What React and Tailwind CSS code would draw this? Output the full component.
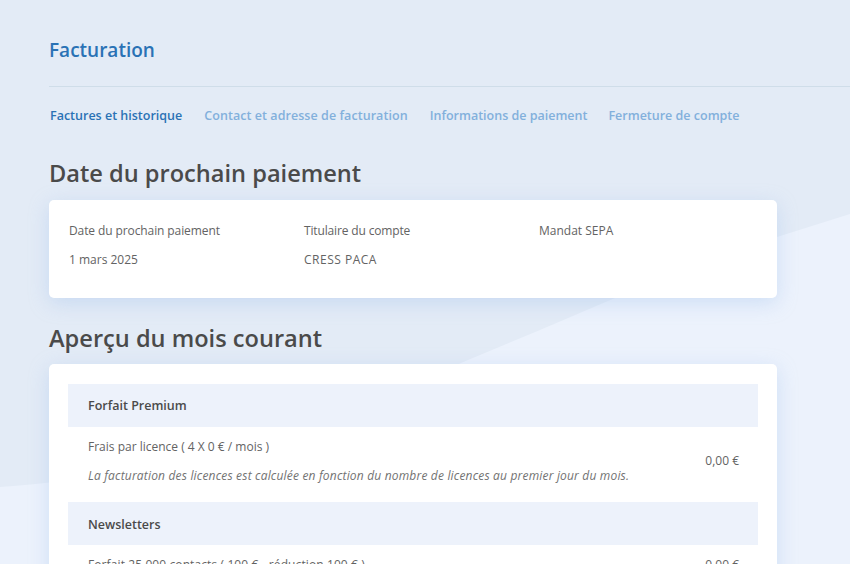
import React from 'react'

const SectionHeader = ({ children, className }) => (
  <div className={`h-[43px] flex items-center bg-[#edf2fb] pl-[20px] text-[12.5px] font-semibold text-[#4a4a4a] ${className}`}>
    {children}
  </div>
)

const App = () => {
  return (
    <div className="relative h-[564px] w-[850px] overflow-hidden bg-[#e3ebf6] font-['Open_Sans',sans-serif] text-[#4a4a4a]">
      {/* fond */}
      <svg className="absolute inset-0" width="850" height="564" viewBox="0 0 850 564">
        <path d="M0 487 C 170 476 330 420 468 360 L 540 330 L 615 298 L 777 237 L 850 214 L 850 564 L 0 564 Z" fill="#ecf2fc" />
      </svg>

      <div className="relative pl-[49px] w-[777px]">
        <div className="h-[87px] w-[801px] border-b border-[#cfdde9] pt-[38px]">
          <h1 className="text-[19px] leading-[24px] font-semibold text-[#2a72b5]">Facturation</h1>
        </div>

        <div className="flex gap-[22px] pl-px pt-[21px] text-[12.5px] leading-[16px] font-semibold text-[#82b0dc]">
          <span className="text-[#2a72b5]">Factures et historique</span>
          <span className="tracking-[0.06px]">Contact et adresse de facturation</span>
          <span>Informations de paiement</span>
          <span className="-ml-px">Fermeture de compte</span>
        </div>

        <h2 className="mt-[34px] text-[23.6px] leading-[30px] font-semibold">Date du prochain paiement</h2>

        <div className="mt-[12px] h-[98px] rounded-[5px] bg-white pl-[20px] pt-[23px] text-[12px] leading-[15px] text-[#636363] shadow-[0_5px_20px_rgba(150,185,235,0.35)]">
          <div className="grid grid-cols-[235px_235px_1fr] gap-y-[14px]">
            <span className="tracking-[-0.1px]">Date du prochain paiement</span>
            <span className="tracking-[-0.15px]">Titulaire du compte</span>
            <span>Mandat SEPA</span>
            <span>1 mars 2025</span>
            <span className="tracking-[0.5px]">CRESS PACA</span>
          </div>
        </div>

        <h2 className="mt-[25px] text-[23.6px] leading-[30px] font-semibold">Aperçu du mois courant</h2>

        <div className="mt-[11px] h-[300px] rounded-[5px] bg-white p-[19px] pt-[20px] text-[12px] leading-[15px] text-[#636363] shadow-[0_5px_20px_rgba(150,185,235,0.35)]">
          <SectionHeader>Forfait Premium</SectionHeader>
          <div className="h-[75px] flex items-center justify-between pl-[20px] pr-[19px] pb-[8px]">
            <div>
              <p>Frais par licence ( 4 X 0 € / mois )</p>
              <p className="mt-[14px] italic tracking-[0.18px] text-[#727272]">
                La facturation des licences est calculée en fonction du nombre de licences au premier jour du mois.
              </p>
            </div>
            <span>0,00 €</span>
          </div>
          <SectionHeader className="pt-px">Newsletters</SectionHeader>
          <div className="flex justify-between pl-[20px] pr-[19px] pt-[12px]">
            <span className="tracking-[0.1px]">Forfait 25 000 contacts ( 100 € - réduction 100 € )</span>
            <span>0,00 €</span>
          </div>
        </div>
      </div>
    </div>
  )
}

export default App
